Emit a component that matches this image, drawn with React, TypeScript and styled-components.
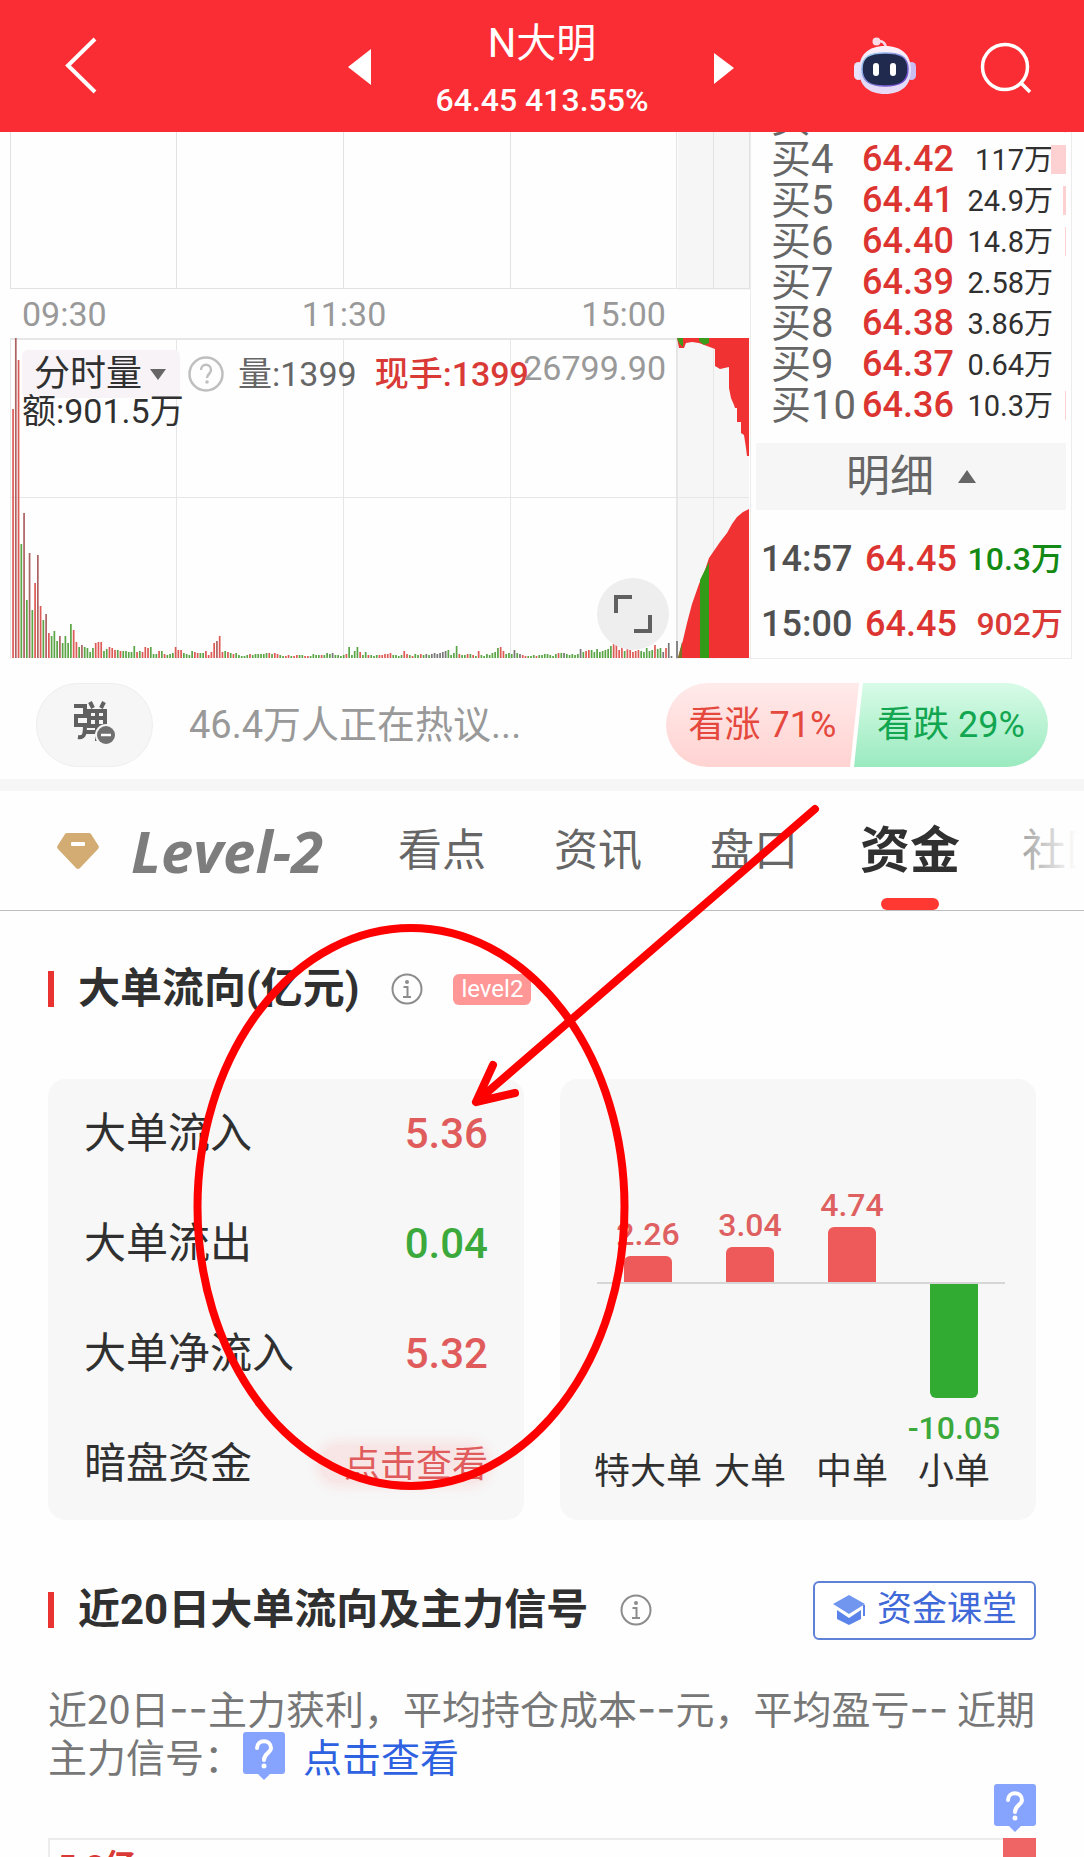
import React from "react";
import styled, { createGlobalStyle } from "styled-components";

const GlobalStyle = createGlobalStyle`
  *, *::before, *::after { box-sizing: border-box; }
  body {
    margin: 0;
    background: #fff;
    color: #303030;
    font-family: Roboto, "Noto Sans CJK SC", sans-serif;
  }
  button {
    border: 0;
    padding: 0;
    background: none;
    color: inherit;
    font: inherit;
  }
  a { color: inherit; text-decoration: none; }
  h1, h2, p, dl, dd, dt, ol { margin: 0; padding: 0; }
  svg { display: block; flex: none; }
`;

const Page = styled.div`
  position: relative;
  height: 100vh;
  overflow: hidden;
  background: #fefefe;
`;

/* ---------- header ---------- */

const Header = styled.header`
  position: relative;
  z-index: 1;
  display: grid;
  grid-template-columns: 1fr 400px 1fr;
  align-items: center;
  height: 132px;
  padding: 0 48px;
  background: #f92d33;
  color: #fff;
`;

const BackButton = styled.button`
  justify-self: start;
  padding: 0 16px;
`;

const Switcher = styled.div`
  display: flex;
  align-items: center;
  justify-content: space-between;
`;

const Stock = styled.div`
  padding-top: 14px;
  text-align: center;
`;

const StockName = styled.h1`
  font-size: 40px;
  line-height: 54px;
  font-weight: 400;
`;

const StockQuote = styled.p`
  font-size: 32px;
  line-height: 58px;
  font-weight: 500;
`;

const HeaderTools = styled.div`
  display: flex;
  justify-content: flex-end;
  align-items: center;
  gap: 64px;
`;

/* ---------- quote area ---------- */

const Quote = styled.section`
  display: grid;
  grid-template-columns: 740fr 322fr;
  height: 527px;
  padding: 0 12px 0 10px;
`;

const Charts = styled.div`
  display: flex;
  flex-direction: column;
  min-width: 0;
`;

const PriceGrid = styled.svg`
  width: 100%;
  height: 158px;
`;

const TimeAxis = styled.div`
  display: flex;
  justify-content: space-between;
  align-items: center;
  height: 48px;
  padding: 0 84px 0 12px;
  font-size: 34px;
  color: #999;
`;

const VolumePane = styled.div`
  position: relative;
  flex: 1;
`;

const VolumeSvg = styled.svg`
  position: absolute;
  inset: 0;
  width: 100%;
  height: 100%;
`;

const VolumeInfo = styled.div`
  position: relative;
  display: flex;
  align-items: center;
  padding: 12px 84px 0 12px;
  font-size: 34px;
  line-height: 48px;
  color: #666;
  white-space: nowrap;
`;

const KindButton = styled.button`
  display: flex;
  align-items: center;
  gap: 8px;
  width: 158px;
  height: 48px;
  padding: 0 12px;
  border-radius: 6px;
  background: #f7f3f7;
  color: #303030;
  font-size: 36px;
  line-height: 48px;
`;

const HelpButton = styled.button`
  margin: 0 14px 0 8px;
`;

const CurrentHand = styled.span`
  margin-left: 18px;
  color: #d93a36;
  font-weight: 500;
`;

const MaxVolume = styled.span`
  flex: 1;
  width: 0;
  display: flex;
  justify-content: flex-end;
  padding-bottom: 12px;
  line-height: 36px;
  color: #999;
`;

const Amount = styled.p`
  position: relative;
  padding-left: 12px;
  font-size: 34px;
  line-height: 26px;
`;

const ExpandButton = styled.button`
  position: absolute;
  right: 81px;
  bottom: 9px;
  display: grid;
  place-items: center;
  width: 72px;
  height: 72px;
  border-radius: 50%;
  background: #eeeeee;
`;

const Side = styled.aside`
  display: flex;
  flex-direction: column;
  border: 1px solid #ececec;
  border-top: 0;
`;

const Orders = styled.ol`
  height: 311px;
  overflow: hidden;
  list-style: none;
  display: flex;
  flex-direction: column;
  justify-content: flex-end;
  padding: 0 5px 18px 20px;
`;

const Order = styled.li`
  flex: none;
  display: grid;
  grid-template-columns: 91px 92px 1fr 13px;
  align-items: center;
  height: 41px;
  line-height: 41px;
  white-space: nowrap;
`;

const OrderName = styled.span`
  font-size: 40px;
  color: #666;
`;

const Price = styled.span`
  font-size: 36px;
  font-weight: 500;
  color: #dc3431;
`;

const OrderVolume = styled.span`
  padding-top: 2px;
  font-size: 29px;
  text-align: right;
`;

const Depth = styled.span<{ $w: number }>`
  justify-self: end;
  width: ${(p) => p.$w}px;
  height: 29px;
  background: #fdd0d2;
`;

const DetailButton = styled.button`
  display: flex;
  align-items: center;
  justify-content: center;
  gap: 24px;
  height: 67px;
  margin: 0 5px;
  background: #f6f6f6;
  color: #666;
  font-size: 44px;
  line-height: 64px;
`;

const Trades = styled.ol`
  list-style: none;
  padding: 16px 8px 0 10px;
`;

const Trade = styled.li`
  display: grid;
  grid-template-columns: 104px 92px 1fr;
  align-items: center;
  height: 65px;
  white-space: nowrap;
`;

const TradeTime = styled.span`
  font-size: 36px;
  font-weight: 500;
  color: #505050;
`;

const TradeVolume = styled.span<{ $up: boolean }>`
  font-size: 32px;
  line-height: 40px;
  font-weight: 500;
  text-align: right;
  color: ${(p) => (p.$up ? "#d93a36" : "#138a13")};
`;

/* ---------- discussion ---------- */

const Discussion = styled.section`
  display: flex;
  align-items: center;
  height: 120px;
  padding: 12px 36px 0;
`;

const BulletButton = styled.button`
  display: grid;
  place-items: center;
  width: 117px;
  height: 84px;
  border: 1px solid #eeeeee;
  border-radius: 42px;
  background: #f6f6f6;
`;

const Talk = styled.p`
  flex: 1;
  padding-left: 36px;
  font-size: 38px;
  line-height: 48px;
  color: #999;
`;

const Vote = styled.div`
  display: flex;
`;

const VoteButton = styled.button<{ $up?: boolean }>`
  height: 84px;
  width: ${(p) => (p.$up ? 193 : 194)}px;
  margin-left: ${(p) => (p.$up ? 0 : -5)}px;
  font-size: 36px;
  line-height: 48px;
  color: ${(p) => (p.$up ? "#e5483d" : "#12a650")};
  border-radius: ${(p) => (p.$up ? "42px 0 0 42px" : "0 42px 42px 0")};
  background: ${(p) =>
    p.$up
      ? "linear-gradient(#ffeaea, #ffd3d1)"
      : "linear-gradient(#d8fbe7, #9aeabf)"};
  clip-path: ${(p) =>
    p.$up
      ? "polygon(0 0, 100% 0, calc(100% - 9px) 100%, 0 100%)"
      : "polygon(9px 0, 100% 0, 100% 100%, 0 100%)"};
`;

/* ---------- tabs ---------- */

const Tabs = styled.nav`
  position: relative;
  display: flex;
  align-items: center;
  height: 132px;
  padding: 0 0 0 57px;
  border-top: 12px solid #f6f6f6;
  border-bottom: 1px solid #bdbdbd;
  overflow: hidden;
  white-space: nowrap;
  font-size: 44px;
  line-height: 64px;
  color: #666;

  &::after {
    content: "";
    position: absolute;
    inset: 0 0 0 auto;
    width: 72px;
    background: linear-gradient(90deg, rgba(254, 254, 254, 0.3), #fefefe 90%);
  }
`;

const Tab = styled.a`
  flex: none;
  width: 156px;
  text-align: center;
`;

const LevelTab = styled.a`
  flex: none;
  width: 265px;
  padding-left: 32px;
  font-family: "Open Sans", "Noto Sans", sans-serif;
  font-size: 58px;
  font-style: italic;
  font-weight: 700;
  color: #7d7d7d;
`;

const ActiveTab = styled(Tab)`
  position: relative;
  font-size: 50px;
  font-weight: 700;
  color: #303030;

  &::after {
    content: "";
    position: absolute;
    left: 50%;
    bottom: -27px;
    width: 58px;
    height: 12px;
    margin-left: -29px;
    border-radius: 6px;
    background: #ff3932;
  }
`;

/* ---------- capital sections ---------- */

const Section = styled.section`
  padding: 48px 48px 0;
`;

const RecentSection = styled(Section)`
  padding-top: 60px;
`;

const SectionHead = styled.div`
  display: flex;
  align-items: center;
  height: 60px;
`;

const Title = styled.h2`
  display: flex;
  align-items: center;
  gap: 24px;
  font-size: 42px;
  line-height: 60px;
  font-weight: 700;

  &::before {
    content: "";
    width: 6px;
    height: 36px;
    background: #e83331;
  }
`;

const InfoButton = styled.button`
  margin-left: 32px;
`;

const LevelBadge = styled.span`
  margin-left: 30px;
  padding: 0 8px;
  border-radius: 6px;
  background: #ff9797;
  color: #fff;
  font-size: 24px;
  line-height: 31px;
`;

const Cards = styled.div`
  display: grid;
  grid-template-columns: 1fr 1fr;
  gap: 36px;
  margin-top: 60px;
`;

const Card = styled.div`
  height: 441px;
  border-radius: 18px;
  background: #f7f7f7;
`;

const FlowList = styled.dl`
  padding: 0 36px;
`;

const FlowRow = styled.div`
  display: flex;
  align-items: center;
  justify-content: space-between;
  height: 110px;
  font-size: 42px;
  line-height: 60px;
`;

const FlowValue = styled.dd<{ $up: boolean }>`
  font-weight: 500;
  color: ${(p) => (p.$up ? "#e05c5c" : "#3ba93b")};
`;

const PeekLink = styled.a`
  display: block;
  padding: 2px 0 0 24px;
  border-radius: 24px;
  font-size: 36px;
  line-height: 36px;
  font-weight: 400;
  background: rgba(255, 120, 120, 0.14);
  box-shadow: 0 0 12px 4px rgba(255, 120, 120, 0.14);
`;

const BarCard = styled(Card)`
  padding: 0 31px 0 37px;
`;

const Bars = styled.div`
  display: grid;
  grid-template-columns: repeat(4, minmax(0, 1fr));
  background: linear-gradient(#d6d6d6, #d6d6d6) 0 203px / 100% 2px no-repeat;
`;

const BarItem = styled.div`
  display: flex;
  flex-direction: column;
  align-items: center;
  white-space: nowrap;
`;

const BarHalf = styled.div<{ $h: number; $end?: boolean }>`
  display: flex;
  flex-direction: column;
  align-items: center;
  justify-content: ${(p) => (p.$end ? "flex-end" : "flex-start")};
  height: ${(p) => p.$h}px;
  padding-top: ${(p) => (p.$end ? 0 : 2)}px;
`;

const Bar = styled.div<{ $up: boolean }>`
  width: 48px;
  border-radius: ${(p) => (p.$up ? "6px 6px 0 0" : "0 0 6px 6px")};
  background: ${(p) => (p.$up ? "#ee5a5a" : "#31ab32")};
`;

const BarValue = styled.span<{ $up: boolean }>`
  padding: ${(p) => (p.$up ? "0 0 2px" : "10px 0 0")};
  font-size: 32px;
  line-height: 40px;
  font-weight: 500;
  color: ${(p) => (p.$up ? "#df6060" : "#3ba93b")};
`;

const BarLabel = styled.span`
  font-size: 36px;
  line-height: 48px;
`;

const ClassButton = styled.button`
  display: flex;
  align-items: center;
  gap: 11px;
  height: 59px;
  margin-left: auto;
  padding: 0 17px;
  border: 2px solid #5f81d6;
  border-radius: 6px;
  background: #fff;
  color: #3f68d8;
  font-size: 35px;
  line-height: 48px;
`;

const Summary = styled.p`
  margin-top: 44px;
  font-size: 39px;
  line-height: 46px;
  font-family: "Noto Sans CJK SC", sans-serif;
  color: #777;
`;

const Dash = styled.span`
  font-family: Inter, "Noto Sans CJK SC", sans-serif;
  font-size: 42px;
`;

const InlineBadge = styled.span`
  display: inline-block;
  vertical-align: top;
  margin-right: 18px;
`;

const BlueLink = styled.a`
  color: #2f62e0;
`;

const BadgeRow = styled.div`
  display: flex;
  justify-content: flex-end;
  margin-top: 4px;
`;

const FlowChart = styled.div`
  display: flex;
  justify-content: space-between;
  height: 200px;
  margin-top: 6px;
  border: 2px solid #ececec;
  border-width: 2px 0 0 2px;
  color: #d93a36;
  font-size: 32px;
  line-height: 40px;
  font-weight: 700;
`;

const FlowChartLabel = styled.span`
  padding: 6px 8px 0;
`;

const FlowChartBar = styled.span`
  width: 33px;
  margin-top: -2px;
  background: #ef6464;
`;

const Annotation = styled.svg`
  position: absolute;
  top: 0;
  left: 0;
  width: 100%;
  height: 1857px;
  pointer-events: none;
`;

/* ---------- data ---------- */

const orders: [string, string, string, number][] = [
  ["买3", "64.43", "11.6万", 1],
  ["买4", "64.42", "117万", 15],
  ["买5", "64.41", "24.9万", 3],
  ["买6", "64.40", "14.8万", 1],
  ["买7", "64.39", "2.58万", 0],
  ["买8", "64.38", "3.86万", 0],
  ["买9", "64.37", "0.64万", 0],
  ["买10", "64.36", "10.3万", 1],
];

const trades = [
  { time: "14:57", price: "64.45", volume: "10.3万", up: false },
  { time: "15:00", price: "64.45", volume: "902万", up: true },
];

const flows = [
  { label: "大单流入", value: "5.36", up: true },
  { label: "大单流出", value: "0.04", up: false },
  { label: "大单净流入", value: "5.32", up: true },
];

const groups = [
  { label: "特大单", value: 2.26 },
  { label: "大单", value: 3.04 },
  { label: "中单", value: 4.74 },
  { label: "小单", value: -10.05 },
];

/* One token per minute: colour letter (r red, d dark red, g green, k grey) and height. */
const minutes = (
  "r249 d320 r298 g114 d145 g58 d105 g48 r75 d103 r52 g38 d44 r25 g22 g27 g17 d22 g15 g22 g15 g34 r28 r16 g11 d13 g11 g10 g6 g10 " +
  "r15 r16 r16 g7 g9 r11 r10 r8 g8 r7 g7 g7 g6 g6 g12 r6 g7 r6 r11 r10 g11 g4 g4 r7 g7 r4 g3 g4 g5 r11 " +
  "r8 r8 g5 g4 g3 g7 r6 r5 g5 g5 r7 r3 r6 r15 d17 r22 r6 g7 r6 g5 r4 g5 g3 g2 g2 g3 r4 g3 g4 g4 " +
  "g4 g4 g5 r5 g4 r5 r4 g3 g2 r2 r3 g2 r2 r3 g3 g3 r2 r2 g2 g4 g3 g3 r3 g3 g5 g4 k5 g3 g3 g2 " +
  "g3 r4 g11 g3 g7 g11 r6 g3 g6 r3 g3 g2 g3 r3 r3 r4 r4 r5 g3 g3 g2 g3 r7 r4 g3 " +
  "r2 g4 g3 r4 g3 k4 g3 k4 k5 k4 k5 k6 k7 g8 g3 g5 g12 r4 g3 g3 r4 g4 r3 g2 r7 g3 g2 g4 g3 " +
  "g5 g6 g10 r11 r7 g4 g5 g4 k8 g5 k4 r3 r2 g2 g2 g3 r2 g3 g3 g4 g4 g3 g2 g4 r5 g5 k5 g4 g3 " +
  "g4 g3 g4 k9 g6 r7 r8 g8 g6 g9 g6 g7 g8 g9 g12 r15 r13 r8 r11 g7 r9 r8 r6 r7 r8 g7 g6 g10 g7 g8 r13 g9 g10 k6 r10 k15 k2 k0 k17"
).split(" ");

const tint: Record<string, string> = {
  r: "#dd5a55",
  d: "#ad6262",
  g: "#5aa545",
  k: "#777777",
};

/* ---------- icons ---------- */

const Robot = () => (
  <svg width="62" height="58" viewBox="0 0 62 58" aria-hidden="true">
    <defs>
      <linearGradient id="shell" x1="0" y1="0" x2="0" y2="1">
        <stop offset="0" stopColor="#fff3fa" />
        <stop offset="0.6" stopColor="#dcdcfb" />
        <stop offset="1" stopColor="#e9d9f6" />
      </linearGradient>
      <linearGradient id="rim" x1="0" y1="0" x2="1" y2="1">
        <stop offset="0" stopColor="#9fd8f0" />
        <stop offset="1" stopColor="#6a35c8" />
      </linearGradient>
    </defs>
    <path d="M23 5c5-2 9 1 9 7" fill="none" stroke="#fbd8e6" strokeWidth="2.5" />
    <circle cx="22.500" cy="4.500" r="4" fill="#fbdce9" />
    <rect x="0" y="25" width="9" height="18" rx="4.500" fill="#e9e2fa" />
    <rect x="53" y="25" width="9" height="18" rx="4.500" fill="#c9bdf2" />
    <path d="M31 9c17 0 26 9 26 24S48 57 31 57 5 48 5 33 14 9 31 9z" fill="url(#shell)" />
    <path d="M31 16c16 0 23 4 23 16s-7 17-23 17S8 44 8 32s7-16 23-16z" fill="#202a4f" stroke="url(#rim)" strokeWidth="1.500" />
    <rect x="19" y="26" width="6" height="13" rx="3" fill="#fff" />
    <rect x="36" y="26" width="6" height="13" rx="3" fill="#fff" />
  </svg>
);

const Info = () => (
  <svg width="32" height="32" viewBox="0 0 32 32" fill="none" stroke="#8c8c8c" strokeWidth="2" aria-hidden="true">
    <circle cx="16" cy="16" r="14.500" />
    <circle cx="16" cy="9" r="2" fill="#8c8c8c" stroke="none" />
    <path d="M12.500 14H16.500V23.500M12 24H20" />
  </svg>
);

const QuestionBadge = () => (
  <svg width="42" height="48" viewBox="0 0 42 48" aria-hidden="true">
    <path d="M3 0H39a3 3 0 0 1 3 3V39a3 3 0 0 1-3 3H27L21 48 15 42H3a3 3 0 0 1-3-3V3a3 3 0 0 1 3-3z" fill="#86a4fd" />
    <path d="M14 16c0-9 14-9 14 0 0 5-7 5-7 12" fill="none" stroke="#fff" strokeWidth="4" strokeLinecap="round" />
    <circle cx="21" cy="34" r="2.500" fill="#fff" />
  </svg>
);

const Volume = () => (
  <VolumeSvg viewBox="0 0 740 321" preserveAspectRatio="none" aria-hidden="true">
    <rect x="668" y="0" width="71" height="321" fill="#f6f6f6" />
    <g fill="#e6e6e6">
      <rect x="0" y="0" width="739" height="2" />
      <rect x="0" y="159" width="739" height="1" />
      <rect x="0" y="0" width="1" height="321" />
      <rect x="166" y="0" width="1" height="321" />
      <rect x="333" y="0" width="1" height="321" />
      <rect x="500" y="0" width="1" height="321" />
      <rect x="666" y="0" width="2" height="321" />
      <rect x="703" y="0" width="1" height="321" />
    </g>
    {minutes.map((m, i) => {
      const h = Number(m.slice(1));
      return <rect key={i} x={2.2 + i * 2.755} y={320 - h} width="1.700" height={h} fill={tint[m[0]]} />;
    })}
    <path d="M667 0H739V118H737L736 110 734 97 731 95V84H727V70H725L724 67 721 60 719 50V29L710 31 705 28V11L697 8 689 5 682 4 676 5 674 10H669z" fill="#f03232" />
    <path d="M667 0H673V9L669 5zM689 0H699V5L694 7 689 3z" fill="#3b9c1c" />
    <path d="M668 320L673 302 677 285 682 266 689 246 695 232 699 220 710 204 717 195 722 186 727 179 733 174 739 171V320z" fill="#f03232" />
    <path d="M690 320V242L695 232 699 224V320z" fill="#329c18" />
    <path d="M668 320L672 304V320z" fill="#7a7426" />
  </VolumeSvg>
);

export default function App() {
  return (
    <Page>
      <GlobalStyle />
      <Header>
        <BackButton aria-label="返回">
          <svg width="34" height="58" viewBox="0 0 34 58" fill="none" stroke="#fff" strokeWidth="4">
            <path d="M31 2L4 28.500 31 55" />
          </svg>
        </BackButton>
        <Switcher>
          <button aria-label="上一只">
            <svg width="30" height="40" viewBox="0 0 30 40" fill="#fff">
              <path d="M29 3V39L6 21z" />
            </svg>
          </button>
          <Stock>
            <StockName>N大明</StockName>
            <StockQuote>64.45 413.55%</StockQuote>
          </Stock>
          <button aria-label="下一只">
            <svg width="30" height="40" viewBox="0 0 30 40" fill="#fff">
              <path d="M2 7V38L22 22z" />
            </svg>
          </button>
        </Switcher>
        <HeaderTools>
          <button aria-label="智能助手">
            <Robot />
          </button>
          <button aria-label="搜索">
            <svg width="56" height="56" viewBox="0 0 56 56" fill="none" stroke="#fff" strokeWidth="3.500">
              <circle cx="25" cy="29" r="22.500" />
              <path d="M41 45L50 54" />
            </svg>
          </button>
        </HeaderTools>
      </Header>

      <Quote>
        <Charts>
          <PriceGrid viewBox="0 0 740 158" preserveAspectRatio="none" aria-hidden="true">
            <rect x="668" width="71" height="158" fill="#f6f6f6" />
            <g fill="#e2e2e2">
              <rect x="0" y="156" width="739" height="1" />
              <rect x="0" width="1" height="157" />
              <rect x="166" width="1" height="157" />
              <rect x="333" width="1" height="157" />
              <rect x="500" width="1" height="157" />
              <rect x="666" width="1" height="157" />
              <rect x="703" width="1" height="157" />
              <rect x="739" width="1" height="157" />
            </g>
          </PriceGrid>
          <TimeAxis>
            <span>09:30</span>
            <span>11:30</span>
            <span>15:00</span>
          </TimeAxis>
          <VolumePane>
            <Volume />
            <VolumeInfo>
              <KindButton>
                分时量
                <svg width="16" height="12" viewBox="0 0 16 12" fill="#666">
                  <path d="M0 1H16L8 12z" />
                </svg>
              </KindButton>
              <HelpButton aria-label="说明">
                <svg width="36" height="36" viewBox="0 0 36 36" fill="none" stroke="#c0bfc0">
                  <circle cx="18" cy="18" r="16.500" strokeWidth="2.500" />
                  <path d="M13 14c0-7 10-7 10 0 0 4-4 4-4 8" strokeWidth="2.500" />
                  <circle cx="19" cy="26" r="1.800" fill="#c0bfc0" stroke="none" />
                </svg>
              </HelpButton>
              <span>量:1399</span>
              <CurrentHand>现手:1399</CurrentHand>
              <MaxVolume>26799.90</MaxVolume>
            </VolumeInfo>
            <Amount>额:901.5万</Amount>
            <ExpandButton aria-label="全屏">
              <svg width="38" height="38" viewBox="0 0 38 38" fill="none" stroke="#606060" strokeWidth="4">
                <path d="M2 18V2H18M36 20V36H20" />
              </svg>
            </ExpandButton>
          </VolumePane>
        </Charts>

        <Side>
          <Orders>
            {orders.map(([name, price, volume, depth]) => (
              <Order key={name}>
                <OrderName>{name}</OrderName>
                <Price>{price}</Price>
                <OrderVolume>{volume}</OrderVolume>
                <Depth $w={depth} />
              </Order>
            ))}
          </Orders>
          <DetailButton>
            明细
            <svg width="18" height="14" viewBox="0 0 18 14" fill="#666">
              <path d="M0 13H18L9 0z" />
            </svg>
          </DetailButton>
          <Trades>
            {trades.map((t) => (
              <Trade key={t.time}>
                <TradeTime>{t.time}</TradeTime>
                <Price>{t.price}</Price>
                <TradeVolume $up={t.up}>{t.volume}</TradeVolume>
              </Trade>
            ))}
          </Trades>
        </Side>
      </Quote>

      <Discussion>
        <BulletButton aria-label="弹幕">
          <svg width="50" height="48" viewBox="0 0 50 48" aria-hidden="true">
            <g fill="none" stroke="#606060" strokeWidth="4">
              <path d="M4 5H15V15H6V24H15C15 34 14 37 8 36" />
              <path d="M20 1L23 7M34 1L31 7M19 10H35V25H19zM19 17H35M27 10V40M16 31H38" />
            </g>
            <circle cx="36" cy="34" r="11" fill="#f6f6f6" />
            <circle cx="36" cy="34" r="9" fill="#707070" />
            <path d="M31 34H41" stroke="#fff" strokeWidth="2.500" />
          </svg>
        </BulletButton>
        <Talk>46.4万人正在热议...</Talk>
        <Vote>
          <VoteButton $up>看涨 71%</VoteButton>
          <VoteButton>看跌 29%</VoteButton>
        </Vote>
      </Discussion>

      <Tabs>
        <svg width="42" height="38" viewBox="0 0 42 38" aria-hidden="true">
          <path d="M10 1H32a3 3 0 0 1 2 1L41 13a3 3 0 0 1 0 4L23 36a3 3 0 0 1-4 0L1 17a3 3 0 0 1 0-4L8 2a3 3 0 0 1 2-1z" fill="#d3ac74" />
          <rect x="14" y="10" width="14" height="4" rx="1" fill="#fff" />
        </svg>
        <LevelTab href="#level2">Level-2</LevelTab>
        <Tab href="#view">看点</Tab>
        <Tab href="#news">资讯</Tab>
        <Tab href="#depth">盘口</Tab>
        <ActiveTab href="#capital">资金</ActiveTab>
        <Tab href="#community">社区</Tab>
      </Tabs>

      <Section id="capital">
        <SectionHead>
          <Title>大单流向(亿元)</Title>
          <InfoButton aria-label="说明">
            <Info />
          </InfoButton>
          <LevelBadge>level2</LevelBadge>
        </SectionHead>
        <Cards>
          <Card>
            <FlowList>
              {flows.map((f) => (
                <FlowRow key={f.label}>
                  <dt>{f.label}</dt>
                  <FlowValue $up={f.up}>{f.value}</FlowValue>
                </FlowRow>
              ))}
              <FlowRow>
                <dt>暗盘资金</dt>
                <FlowValue $up>
                  <PeekLink href="#dark">点击查看</PeekLink>
                </FlowValue>
              </FlowRow>
            </FlowList>
          </Card>
          <BarCard>
            <Bars>
              {groups.map((g) => {
                const up = g.value > 0;
                const bar = <Bar $up={up} style={{ height: Math.round(Math.abs(g.value) * 11.55) }} />;
                const value = <BarValue $up={up}>{g.value.toFixed(2)}</BarValue>;
                return (
                  <BarItem key={g.label}>
                    <BarHalf $h={203} $end>
                      {up && value}
                      {up && bar}
                    </BarHalf>
                    <BarHalf $h={166}>
                      {!up && bar}
                      {!up && value}
                    </BarHalf>
                    <BarLabel>{g.label}</BarLabel>
                  </BarItem>
                );
              })}
            </Bars>
          </BarCard>
        </Cards>
      </Section>

      <RecentSection>
        <SectionHead>
          <Title>近20日大单流向及主力信号</Title>
          <InfoButton aria-label="说明">
            <Info />
          </InfoButton>
          <ClassButton>
            <svg width="34" height="32" viewBox="0 0 34 32" aria-hidden="true">
              <path d="M17 1L33 10 17 20 1 10z" fill="#7196f0" />
              <path d="M5 16L17 24 29 16V25L17 31 5 25z" fill="#5b84ea" />
              <path d="M32 11V22" stroke="#5b84ea" strokeWidth="2" />
            </svg>
            资金课堂
          </ClassButton>
        </SectionHead>
        <Summary>
          近20日<Dash>--</Dash>主力获利，平均持仓成本<Dash>--</Dash>元，平均盈亏<Dash>--</Dash> 近期主力信号：
          <InlineBadge>
            <QuestionBadge />
          </InlineBadge>
          <BlueLink href="#signal">点击查看</BlueLink>
        </Summary>
        <BadgeRow>
          <QuestionBadge />
        </BadgeRow>
        <FlowChart>
          <FlowChartLabel>5.8亿</FlowChartLabel>
          <FlowChartBar />
        </FlowChart>
      </RecentSection>

      <Annotation viewBox="0 0 1084 1857" preserveAspectRatio="none" fill="none" stroke="#ff0000" strokeWidth="8" strokeLinecap="round" strokeLinejoin="round" aria-hidden="true">
        <ellipse cx="411" cy="1207" rx="213.500" ry="279" />
        <path d="M815 809L476 1102M493 1065L476 1102 515 1093" />
      </Annotation>
    </Page>
  );
}
